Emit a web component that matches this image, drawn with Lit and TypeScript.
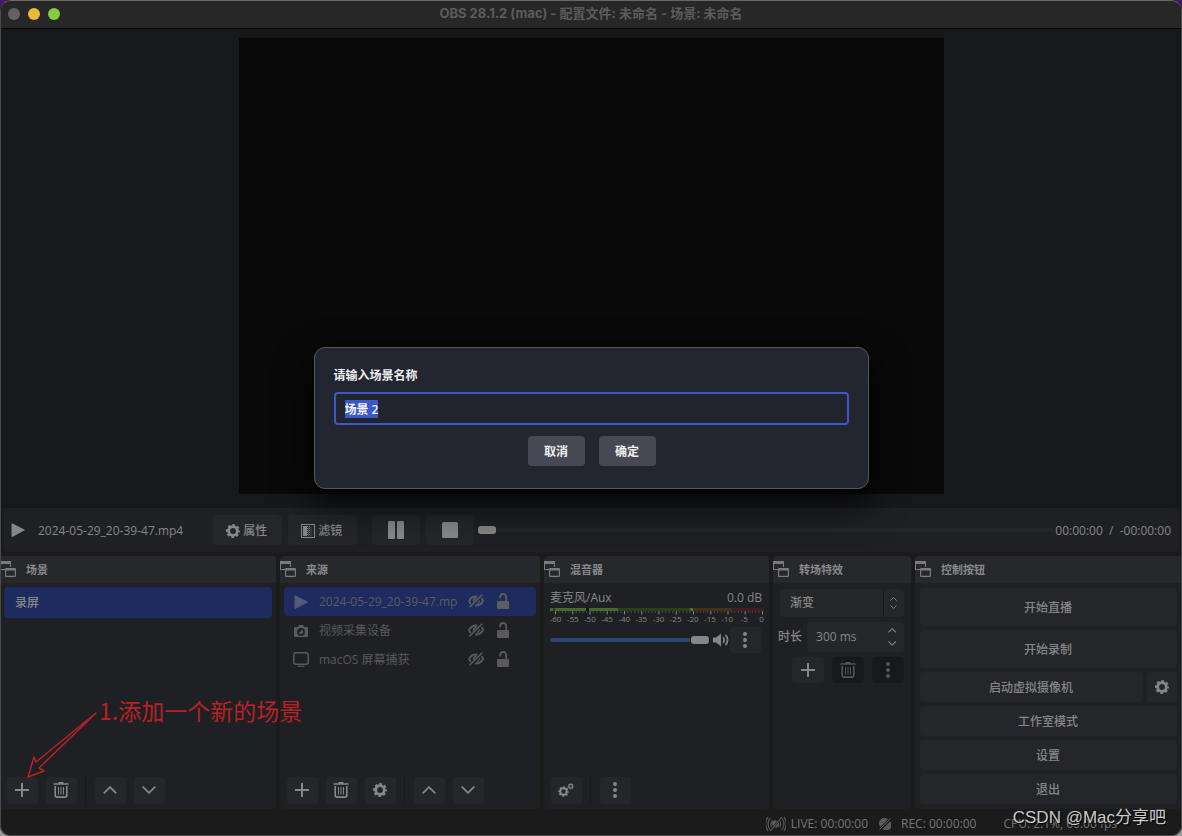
import { LitElement, html, css, svg } from "lit";
import { customElement, property, query } from "lit/decorators.js";
import { classMap } from "lit/directives/class-map.js";

const gearShape = (cx: number, cy: number, s: number) => svg`
  <g transform="translate(${cx} ${cy}) scale(${s})" fill="none" stroke="currentColor">
    <circle r="4.3" stroke-width="2.8"></circle>
    <circle r="6" stroke-width="2" stroke-dasharray="2.7 2.012" stroke-dashoffset="1.35"></circle>
  </g>`;

const icons: Record<string, { w: number; h: number; body: unknown }> = {
  dock: {
    w: 16, h: 16,
    body: svg`<path d="M0 0h11v6h-1V3H1v5h4v1H0z" fill="currentColor"></path>
      <path fill-rule="evenodd" d="M5 8a1 1 0 0 1 1-1h9a1 1 0 0 1 1 1v7a1 1 0 0 1-1 1H6a1 1 0 0 1-1-1zM6.200 9.500v5.300h8.600V9.500z" fill="currentColor"></path>`,
  },
  plus: { w: 14, h: 14, body: svg`<path d="M7 0v14M0 7h14" stroke="currentColor" stroke-width="2"></path>` },
  trash: {
    w: 16, h: 16,
    body: svg`<path d="M0.500 2h15M5.500 0.800h5" stroke="currentColor" stroke-width="1.600" fill="none"></path>
      <path d="M2.200 4v9.200a1.900 1.900 0 0 0 1.900 1.900h7.800a1.900 1.900 0 0 0 1.900-1.900V4" fill="none" stroke="currentColor" stroke-width="1.600"></path>
      <path d="M5.500 5v7.500M8 5v7.500M10.500 5v7.500" stroke="currentColor"></path>`,
  },
  up: { w: 14, h: 8, body: svg`<path d="M0.700 7.300 7 1.200l6.300 6.100" fill="none" stroke="currentColor" stroke-width="1.800"></path>` },
  down: { w: 14, h: 8, body: svg`<path d="M0.700 0.700 7 6.800l6.300-6.100" fill="none" stroke="currentColor" stroke-width="1.800"></path>` },
  gear: { w: 14, h: 14, body: gearShape(7, 7, 1) },
  gears: { w: 16, h: 14, body: svg`${gearShape(5.5, 8.5, 0.76)}${gearShape(12.7, 3.3, 0.44)}` },
  dots: {
    w: 4, h: 16,
    body: svg`<g fill="currentColor"><circle cx="2" cy="2" r="2"></circle><circle cx="2" cy="8" r="2"></circle><circle cx="2" cy="14" r="2"></circle></g>`,
  },
  play: { w: 14, h: 14, body: svg`<path d="M1 .8 13.400 7 1 13.600z" fill="currentColor" stroke="currentColor" stroke-linejoin="round"></path>` },
  pause: { w: 16, h: 18, body: svg`<rect width="7" height="18" rx="1" fill="currentColor"></rect><rect x="9" width="7" height="18" rx="1" fill="currentColor"></rect>` },
  stop: { w: 16, h: 16, body: svg`<rect width="16" height="16" rx="1.500" fill="currentColor"></rect>` },
  filter: {
    w: 14, h: 14,
    body: svg`<rect x=".5" y=".5" width="13" height="13" fill="none" stroke="currentColor"></rect>
      <rect x="2" y="2" width="4" height="10" fill="currentColor"></rect>
      <path d="M6.500 2v10M8.500 2v10" stroke="currentColor" stroke-dasharray="1 1"></path>
      <path d="M7.500 3v9M10 3v9" stroke="currentColor" stroke-dasharray="1 1" opacity=".6"></path>`,
  },
  camera: {
    w: 14, h: 12,
    body: svg`<path fill-rule="evenodd" fill="currentColor" d="M1 2h2.800L5 0h4l1.200 2H13a1 1 0 0 1 1 1v8a1 1 0 0 1-1 1H1a1 1 0 0 1-1-1V3a1 1 0 0 1 1-1zM7 3a3.900 3.900 0 1 0 0 7.800A3.900 3.900 0 0 0 7 3z"></path>
      <path fill="currentColor" d="M7 4.700a2.200 2.200 0 1 1-2.200 2.400l1.900-.3z"></path>`,
  },
  screen: {
    w: 16, h: 15,
    body: svg`<rect x=".8" y=".8" width="14.400" height="11.400" rx="2" fill="none" stroke="currentColor" stroke-width="1.500"></rect>
      <path d="M4.500 14.300h7" stroke="currentColor" stroke-width="1.200"></path>`,
  },
  hidden: {
    w: 16, h: 14,
    body: svg`<path fill="none" stroke="currentColor" stroke-width="1.800" d="M2.800 10.200C1.900 9.300 1.400 8.200 1.100 7 2.400 4 5.200 2.300 9.200 2.500M13.600 4.200c.7.800 1.200 1.700 1.400 2.800-1.400 3-4.400 4.600-7.800 4.500"></path>
      <path d="M1.500 13.300 14.200.8" stroke="currentColor" stroke-width="1.600"></path>
      <path fill="currentColor" d="M9.600 3.600 4.900 8.300C4.300 5.600 6.300 3.300 9.600 3.600zM11.900 5.600c.4 2.800-1.200 4.600-3.800 4.800z"></path>`,
  },
  unlocked: {
    w: 12, h: 16,
    body: svg`<rect y="8" width="12" height="8" rx="1" fill="currentColor"></rect>
      <path d="M9.200 8.500V4a3 3 0 0 0-6 0v1.500" fill="none" stroke="currentColor" stroke-width="1.800"></path>`,
  },
  speaker: {
    w: 17, h: 14,
    body: svg`<path d="M0 4.500h3.200L8 .5v13L3.200 9.500H0z" fill="currentColor"></path>
      <path d="M10 4.300a4 4 0 0 1 0 5.400M12.500 1.800a7.500 7.500 0 0 1 0 10.400" fill="none" stroke="currentColor" stroke-width="1.700"></path>`,
  },
  live: {
    w: 20, h: 16,
    body: svg`<g fill="none" stroke="currentColor" stroke-width="1.100"><path d="M4.300 2.200a8.500 8.500 0 0 0 0 11.600M6.700 4.500a5 5 0 0 0-.8 6.500M15.700 2.200a8.500 8.500 0 0 1 0 11.600M13.500 5a5 5 0 0 1 0 6.200M2 1.200a11 11 0 0 0 0 13.600M18 1.200a11 11 0 0 1 0 13.600M4.500 15 15.500 1"></path></g>
      <path d="M11.200 5.200A3 3 0 0 0 7.200 10zM12.600 6.600A3 3 0 0 1 8.600 11z" fill="currentColor"></path>`,
  },
  rec: {
    w: 12, h: 12,
    body: svg`<path d="M9 1.500A5.200 5.200 0 0 0 1.500 9zM11 3.500A5.200 5.200 0 0 1 3.500 11z" fill="currentColor"></path><path d="M.5 11.500 11.500.5" stroke="currentColor"></path>`,
  },
};

const icon = (name: string, scale = 1) => {
  const i = icons[name];
  return html`<svg class="icon" width=${i.w * scale} height=${i.h * scale} viewBox="0 0 ${i.w} ${i.h}" aria-hidden="true">${i.body}</svg>`;
};

const shared = css`
  * { box-sizing: border-box; }
  button, input, select { font: inherit; color: inherit; margin: 0; }
  button {
    display: flex; align-items: center; justify-content: center; gap: 3px;
    border: 0; padding: 0; border-radius: 4px; background: #25262a; color: inherit; font-weight: 500;
  }
  button:disabled { background: #17181c; color: #55565a; }
  .icon { display: block; flex: none; }
`;

@customElement("obs-dock")
class ObsDock extends LitElement {
  @property() heading = "";
  static styles = [shared, css`
    :host { display: flex; flex-direction: column; min-width: 0; background: #1f2023; border-radius: 4px; }
    .head {
      display: flex; align-items: center; gap: 10px; height: 27px; flex: none;
      background: #27282b; border-radius: 4px 4px 0 0; color: #7b7b7b;
    }
    .head .icon { margin-bottom: 1px; }
    .title { margin: 0; font-size: 11px; line-height: 16px; font-weight: 700; color: #88898a; }
    .body { flex: 1; display: flex; flex-direction: column; min-height: 0; }
  `];
  render() {
    return html`<div class="head">${icon("dock")}<h2 class="title">${this.heading}</h2></div>
      <div class="body"><slot></slot></div>`;
  }
}

const sources = [
  { kind: "play", name: "2024-05-29_20-39-47.mp", selected: true },
  { kind: "camera", name: "视频采集设备", selected: false },
  { kind: "screen", name: "macOS 屏幕捕获", selected: false },
];

const labels: Record<string, string> = {
  plus: "添加", trash: "删除", gear: "属性", up: "上移", down: "下移", gears: "高级音频属性", dots: "更多",
};

@customElement("app-root")
class AppRoot extends LitElement {
  @query("#scene-name") sceneName!: HTMLInputElement;

  static styles = [shared, css`
    :host {
      display: block; background: linear-gradient(#47156f, #9a9a9a);
      font: 12px/16px "Open Sans", "Noto Sans CJK SC", sans-serif; color: #868788;
    }
    .window {
      position: relative; display: flex; flex-direction: column; min-height: 100vh;
      background: #1b1b1c; border-radius: 10px; overflow: hidden;
    }
    .window::after {
      content: ""; position: absolute; inset: 0; pointer-events: none;
      border: 1px solid #4a4a4b; border-top-color: #686868; border-radius: 10px;
    }
    .titlebar {
      display: grid; grid-template-columns: 1fr auto 1fr; align-items: center;
      height: 29px; padding: 0 8px; background: #272727; border-bottom: 1px solid #050505;
    }
    .lights { display: flex; gap: 8px; }
    .light { width: 12px; height: 12px; border-radius: 50%; background: #636363; }
    .light.min { background: #e9bb34; }
    .light.max { background: #89cb40; }
    .caption { margin: 0 0 2px; font: 700 13px/18px Inter, "Noto Sans CJK SC", sans-serif; color: #5c5c5c; }
    .preview {
      flex: 1; display: flex; justify-content: center; padding: 9px 0 14px;
      background: #17181c;
    }
    .canvas { height: 456px; aspect-ratio: 705 / 456; background: #090909; }

    .media {
      display: flex; align-items: center; height: 44px; margin: 0 4px; padding: 0 7px 0 7px;
      background: #1f2023; border-radius: 4px;
    }
    .media .file { margin: 0 30px 0 13px; padding-top: 2px; }
    .media button { height: 30px; }
    .media .wide { width: 69px; margin-right: 6px; padding: 2px 2px 0 0; }
    .media .tool { width: 48px; margin-right: 6px; }
    .media .tool.first { margin-left: 9px; }
    .media .tool.last { margin-right: 4px; }
    .seek { flex: 1; min-width: 0; }
    .time { margin-left: 2px; padding-top: 2px; white-space: pre; }

    input[type="range"] { appearance: none; background: none; height: 10px; }
    input[type="range"]::-webkit-slider-runnable-track { height: 4px; border-radius: 2px; background: #25262a; }
    input[type="range"]::-webkit-slider-thumb {
      appearance: none; width: 18px; height: 8px; margin-top: -2px; border-radius: 3px; background: #858585;
    }
    .volume::-webkit-slider-runnable-track { background: linear-gradient(90deg, #2a4672 88%, #25262a 88%) !important; }

    .docks {
      display: grid; grid-template-columns: 276fr 260fr 225fr 138fr 267fr; gap: 4px;
      height: 253px; margin-top: 4px;
    }
    .list { list-style: none; margin: 0; padding: 4px; flex: 1; }
    .scene {
      display: flex; align-items: center; height: 31px; padding: 0 11px; border-radius: 4px;
      background: #1e2b5e; font-weight: 500;
    }
    .source {
      display: flex; align-items: center; height: 29px; padding: 0 25px 0 9px; border-radius: 4px;
      color: #5a5a5a;
    }
    .source.on { background: #1e2b5e; color: #5c5d60; }
    .source.on .kind { color: #555b7a; }
    .kind { display: flex; justify-content: center; width: 16px; margin-right: 10px; }
    .source .name { flex: 1; white-space: nowrap; }
    .flag { display: flex; justify-content: center; width: 16px; margin: 0 13px 1px 0; }
    .flag:last-child { width: 12px; margin-right: 2px; }

    .bar { display: flex; gap: 8px; padding: 0 7px 5px; margin-top: auto; }
    .bar button { width: 31px; height: 27px; padding: 0 1px 1px 0; }
    .sep { width: 2px; border-left: 1px dotted #111; }

    .mixer { padding: 7px 6px 0; }
    .mix-top { display: flex; justify-content: space-between; padding-right: 1px; height: 18px; }
    .meter { display: block; width: 100%; height: 8px; }
    .scale {
      display: grid; grid-template-columns: repeat(13, 1fr); margin: -2px -7px 0 -3px;
      font-size: 8px; line-height: 10px; text-align: center; font-weight: 500;
    }
    .mix-row { display: flex; align-items: center; height: 26px; margin: 3px 2px 0 0; }
    .mix-row .volume { flex: 1; min-width: 0; margin-right: 4px; }
    .mix-row button { width: 31px; height: 26px; padding-right: 1px; }

    .transitions { padding: 6px 7px 0 5px; display: grid; grid-template-columns: minmax(0, 1fr); gap: 5px; }
    .combo { position: relative; margin-left: 2px; height: 28px; }
    .combo select {
      appearance: none; width: 100%; height: 28px; padding: 0 10px; border: 0; border-radius: 4px; font-weight: 500;
      background: linear-gradient(#19191c, #19191c) right 20px top / 1px 100% no-repeat #25262a;
    }
    .combo .arrows { position: absolute; right: 7px; top: 8px; display: grid; gap: 4px; pointer-events: none; }
    .duration { display: flex; align-items: center; gap: 5px; font-weight: 500; }
    .spin { flex: 1; min-width: 0; display: flex; height: 30px; background: #25262a; border-radius: 4px; font-weight: 400; }
    .spin input { flex: 1; min-width: 0; border: 0; background: none; padding: 0 0 0 9px; }
    .spin .steps { display: grid; width: 24px; padding: 2px 0; }
    .spin button { background: none; }
    .trio { display: flex; justify-content: flex-end; gap: 8px; }
    .trio button { width: 32px; height: 26px; }

    .controls { display: grid; gap: 4px; padding: 5px 5px 0; }
    .controls button { height: 30px; padding: 2px 1px 0 0; }
    .controls .big { height: 38px; }
    .pair { display: grid; grid-template-columns: 1fr 30px; gap: 4px; }
    .controls .cog { padding: 0; }

    .status {
      position: relative; display: flex; align-items: center; justify-content: flex-end; height: 27px;
      padding: 2px 65px 0 0; color: #767676;
    }
    .status .icon { color: #5a5a5a; margin-right: 5px; }
    .status .rec { margin: 0 27px 0 11px; display: flex; align-items: center; gap: 5px; }
    .status .live { display: flex; align-items: center; }
    .brand {
      position: absolute; right: 16px; bottom: 7px;
      font: 17px/22px "Liberation Sans", "Noto Sans CJK SC", sans-serif; color: #c9c9c9;
      text-shadow: 1px 1px 1px #000;
    }

    .note { position: absolute; left: 25px; bottom: 56px; color: #b82225; pointer-events: none; }
    .note svg { display: block; }
    .note span {
      position: absolute; left: 74px; top: -17px; white-space: nowrap;
      font: 400 23px/30px "Noto Sans CJK SC", sans-serif;
    }

    .layer { position: absolute; inset: 0; display: flex; align-items: center; justify-content: center; }
    .dialog {
      width: 555px; max-width: 90%; padding: 20px 19px 22px; border: 1px solid #56575c; border-radius: 11px;
      background: #232530; color: #f0f0f2; font-weight: 600; box-shadow: 0 14px 34px 4px rgba(0, 0, 0, 0.7);
    }
    .dialog label { display: block; margin-bottom: 8px; }
    .dialog input {
      display: block; width: 100%; height: 33px; padding: 0 9px; border: 2px solid #3c57c8;
      border-radius: 4px; background: #22242e; outline: none;
    }
    .dialog input::selection { background: #3c57c8; color: #f4f4f6; }
    .actions { display: flex; justify-content: center; gap: 14px; margin-top: 11px; padding-left: 1px; }
    .actions button { width: 57px; height: 30px; padding-top: 2px; background: #464954; font-weight: 600; }
  `];

  firstUpdated() {
    this.sceneName.focus();
    this.sceneName.select();
  }

  private bar(names: string[]) {
    return html`<div class="bar">${names.map((n) =>
      n === "|" ? html`<span class="sep"></span>`
        : html`<button type="button" aria-label=${labels[n]}>${icon(n)}</button>`)}</div>`;
  }

  private meter() {
    const ticks = Array.from({ length: 61 }, (_, i) => i);
    return html`<svg class="meter" viewBox="0 0 213 8" preserveAspectRatio="none" aria-hidden="true">
      <rect width="143" height="3" fill="#2a401b"></rect>
      <rect x="143" width="39" height="3" fill="#453019"></rect>
      <rect x="182" width="31" height="3" fill="#451c22"></rect>
      <rect width="3" height="3" fill="#46692a"></rect>
      <rect x="5" width="63" height="3" fill="#46692a"></rect>
      <rect x="36" width="3" height="3" fill="#0a0a0a"></rect>
      <rect x="140" width="3" height="3" fill="#4d722c"></rect>
      ${ticks.map((i) => svg`<rect x=${5 + i * 3.45} y="3" width="1" height=${i % 5 ? 2 : 3.5} fill=${i % 5 ? "#4a4a4c" : "#858585"}></rect>`)}
    </svg>`;
  }

  render() {
    return html`
      <main class="window">
        <header class="titlebar">
          <div class="lights"><span class="light"></span><span class="light min"></span><span class="light max"></span></div>
          <h1 class="caption">OBS 28.1.2 (mac) - 配置文件: 未命名 - 场景: 未命名</h1>
        </header>
        <section class="preview"><div class="canvas"></div></section>

        <section class="media">
          ${icon("play")}
          <span class="file">2024-05-29_20-39-47.mp4</span>
          <button class="wide" type="button">${icon("gear")}属性</button>
          <button class="wide" type="button">${icon("filter")}滤镜</button>
          <button class="tool first" type="button" aria-label="暂停">${icon("pause")}</button>
          <button class="tool last" type="button" aria-label="停止">${icon("stop")}</button>
          <input class="seek" type="range" value="0" aria-label="播放进度" />
          <span class="time">00:00:00  /  -00:00:00</span>
        </section>

        <section class="docks">
          <obs-dock heading="场景">
            <ul class="list"><li class="scene">录屏</li></ul>
            ${this.bar(["plus", "trash", "|", "up", "down"])}
          </obs-dock>

          <obs-dock heading="来源">
            <ul class="list">
              ${sources.map((s) => html`<li class=${classMap({ source: true, on: s.selected })}>
                <span class="kind">${icon(s.kind)}</span><span class="name">${s.name}</span>
                <span class="flag">${icon("hidden")}</span><span class="flag">${icon("unlocked")}</span>
              </li>`)}
            </ul>
            ${this.bar(["plus", "trash", "gear", "|", "up", "down"])}
          </obs-dock>

          <obs-dock heading="混音器">
            <div class="mixer">
              <div class="mix-top"><label for="volume">麦克风/Aux</label><span>0.0 dB</span></div>
              ${this.meter()}
              <div class="scale">${Array.from({ length: 13 }, (_, i) => html`<span>${i * 5 - 60}</span>`)}</div>
              <div class="mix-row">
                <input id="volume" class="volume" type="range" value="100" />
                ${icon("speaker")}
                <button type="button" aria-label="更多">${icon("dots")}</button>
              </div>
            </div>
            ${this.bar(["gears", "|", "dots"])}
          </obs-dock>

          <obs-dock heading="转场特效">
            <div class="transitions">
              <div class="combo">
                <select aria-label="转场特效"><option>渐变</option></select>
                <span class="arrows">${icon("up", 0.5)}${icon("down", 0.5)}</span>
              </div>
              <div class="duration">
                <label for="duration">时长</label>
                <div class="spin">
                  <input id="duration" type="text" value="300 ms" />
                  <div class="steps">
                    <button type="button" aria-label="增加">${icon("up", 0.6)}</button>
                    <button type="button" aria-label="减少">${icon("down", 0.6)}</button>
                  </div>
                </div>
              </div>
              <div class="trio">
                <button type="button" aria-label="添加">${icon("plus")}</button>
                <button type="button" aria-label="删除" disabled>${icon("trash")}</button>
                <button type="button" aria-label="更多" disabled>${icon("dots")}</button>
              </div>
            </div>
          </obs-dock>

          <obs-dock heading="控制按钮">
            <div class="controls">
              <button class="big" type="button">开始直播</button>
              <button class="big" type="button">开始录制</button>
              <div class="pair">
                <button type="button">启动虚拟摄像机</button>
                <button class="cog" type="button" aria-label="虚拟摄像机设置">${icon("gear")}</button>
              </div>
              <button type="button">工作室模式</button>
              <button type="button">设置</button>
              <button type="button">退出</button>
            </div>
          </obs-dock>
        </section>

        <footer class="status">
          <span class="live">${icon("live")}LIVE: 00:00:00</span>
          <span class="rec">${icon("rec")}REC: 00:00:00</span>
          <span>CPU: 2.1%, 60.00 fps</span>
          <span class="brand">CSDN @Mac分享吧</span>
        </footer>

        <div class="note">
          <svg width="72" height="68" viewBox="0 0 72 68" fill="none" stroke="currentColor" stroke-width="1.500" stroke-linejoin="round" aria-hidden="true">
            <path d="M71 1 11 50 9 45 3 65 19 59 14 56z"></path>
          </svg>
          <span>1.添加一个新的场景</span>
        </div>

        <div class="layer">
          <form class="dialog" role="dialog" aria-label="请输入场景名称" @submit=${(e: Event) => e.preventDefault()}>
            <label for="scene-name">请输入场景名称</label>
            <input id="scene-name" type="text" value="场景 2" autocomplete="off" />
            <div class="actions">
              <button type="button">取消</button>
              <button type="submit">确定</button>
            </div>
          </form>
        </div>
      </main>`;
  }
}
